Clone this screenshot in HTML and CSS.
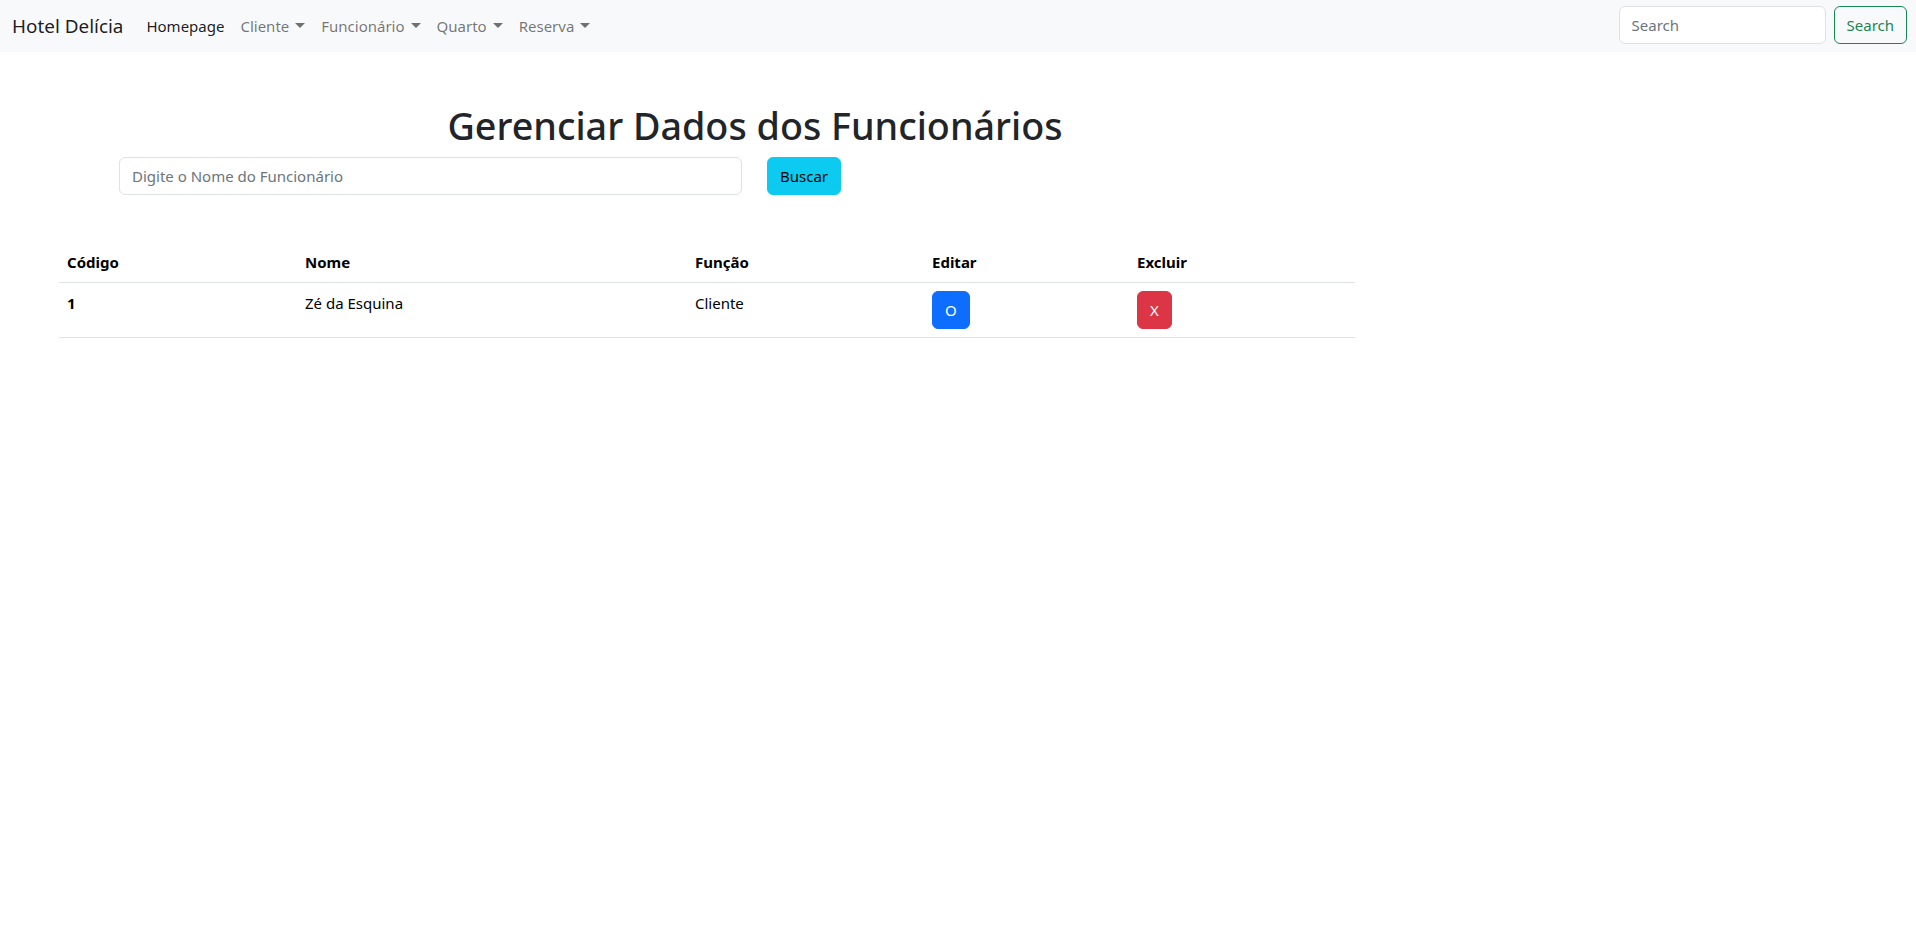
FILE: index.html
```html
<!DOCTYPE html>
<html lang="pt-BR">
<head>
  <meta charset="UTF-8">
  <title>Hotel Delícia - Funcionários</title>
  <link rel="stylesheet" href="styles.css">
</head>
<body>
  <nav class="navbar">
    <a class="brand" href="#">Hotel Delícia</a>
    <ul class="nav-links">
      <li><a class="nav-link active" href="#">Homepage</a></li>
      <li><a class="nav-link dropdown" href="#">Cliente</a></li>
      <li><a class="nav-link dropdown" href="#">Funcionário</a></li>
      <li><a class="nav-link dropdown" href="#">Quarto</a></li>
      <li><a class="nav-link dropdown" href="#">Reserva</a></li>
    </ul>
    <form class="nav-search">
      <input type="search" class="form-control nav-input" placeholder="Search">
      <button type="submit" class="btn btn-outline-success">Search</button>
    </form>
  </nav>

  <div class="page">
    <h1 class="title">Gerenciar Dados dos Funcionários</h1>

    <form class="search-row">
      <input type="text" class="form-control name-input" placeholder="Digite o Nome do Funcionário">
      <button type="submit" class="btn btn-info">Buscar</button>
    </form>

    <table class="table">
      <thead>
        <tr>
          <th class="col-code">Código</th>
          <th class="col-name">Nome</th>
          <th class="col-role">Função</th>
          <th class="col-edit">Editar</th>
          <th>Excluir</th>
        </tr>
      </thead>
      <tbody>
        <tr>
          <th>1</th>
          <td>Zé da Esquina</td>
          <td>Cliente</td>
          <td><button class="btn btn-primary">O</button></td>
          <td><button class="btn btn-danger">X</button></td>
        </tr>
      </tbody>
    </table>
  </div>
</body>
</html>
```

FILE: styles.css
```css
body { margin: 0; font-family: "Noto Sans", "Open Sans", sans-serif; font-size: 15px; line-height: 24px; color: #212529; background: #fff; }
a { text-decoration: none; }

.navbar { display: flex; align-items: center; height: 52px; padding: 0 9px 0 12px; background: #f8f9fa; }
.brand { font-size: 18.9px; line-height: 30px; color: rgba(0, 0, 0, .9); margin-right: 15px; }
.nav-links { display: flex; list-style: none; margin: 0; padding: 0; }
.nav-link { display: block; padding: 8px; color: rgba(0, 0, 0, .55); }
.nav-link.active { color: rgba(0, 0, 0, .9); }
.dropdown::after { content: ""; display: inline-block; margin-left: 6px; vertical-align: 4px; border-top: 5px solid; border-right: 5px solid transparent; border-left: 5px solid transparent; }
.nav-search { display: flex; margin-left: auto; gap: 8px; margin-top: -3px; }

.form-control { font: inherit; color: #212529; padding: 6px 12px; height: 38px; box-sizing: border-box; border: 1px solid #dee2e6; border-radius: 6px; background: #fff; }
.form-control::placeholder { color: #6c757d; }
.nav-input { width: 207px; }

.btn { font: inherit; line-height: 24px; padding: 6px 12px; border: 1px solid transparent; border-radius: 6px; cursor: pointer; }
.btn-outline-success { color: #198754; border-color: #198754; background: transparent; }
.btn-info { background: #0dcaf0; border-color: #0dcaf0; color: #000; }
.btn-primary { background: #0d6efd; border-color: #0d6efd; color: #fff; }
.btn-danger { background: #dc3545; border-color: #dc3545; color: #fff; }

.page { padding-left: 59px; width: 1296px; }
.title { width: 1392px; margin: 50px 0 7px; text-align: center; font-size: 37.7px; font-weight: 500; line-height: 48px; }
.search-row { display: flex; gap: 25px; margin-left: 60px; }
.name-input { width: 623px; }

.table { width: 1296px; margin-top: 47px; border-collapse: collapse; color: #000; }
.table th, .table td { padding: 8px; text-align: left; vertical-align: top; border-bottom: 1px solid #dee2e6; }
.table th { font-weight: 700; }
.col-code { width: 222px; }
.col-name { width: 374px; }
.col-role { width: 221px; }
.col-edit { width: 189px; }
```
